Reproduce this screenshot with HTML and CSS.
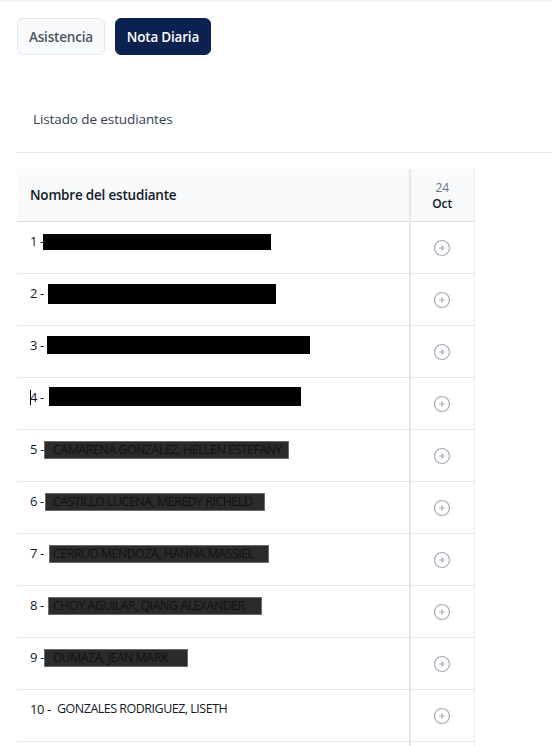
FILE: index.html
```html
<!DOCTYPE html>
<html lang="es">
<head>
  <meta charset="UTF-8">
  <meta name="viewport" content="width=device-width, initial-scale=1.0">
  <title>Nota Diaria</title>
  <link rel="stylesheet" href="styles.css">
</head>
<body>
  <div class="page">
    <div class="tabs">
      <button class="tab">Asistencia</button>
      <button class="tab active">Nota Diaria</button>
    </div>

    <div class="list-header">Listado de estudiantes</div>

    <table class="grades">
      <thead>
        <tr>
          <th class="name-col">Nombre del estudiante</th>
          <th class="date-col"><span class="day">24</span><span class="month">Oct</span></th>
        </tr>
      </thead>
      <tbody>
        <tr>
          <td class="name"><span class="num">1 -</span><span class="redact r1"></span></td>
          <td class="grade"><span class="add"></span></td>
        </tr>
        <tr>
          <td class="name"><span class="num">2 -</span><span class="redact r2"></span></td>
          <td class="grade"><span class="add"></span></td>
        </tr>
        <tr>
          <td class="name"><span class="num">3 -</span><span class="redact r3"></span></td>
          <td class="grade"><span class="add"></span></td>
        </tr>
        <tr>
          <td class="name"><span class="caret"></span><span class="num">4 -</span><span class="redact r4"></span></td>
          <td class="grade"><span class="add"></span></td>
        </tr>
        <tr>
          <td class="name"><span class="num">5 -</span><span class="mark m5">CAMARENA GONZALEZ, HELLEN ESTEFANY</span></td>
          <td class="grade"><span class="add"></span></td>
        </tr>
        <tr>
          <td class="name"><span class="num">6 -</span><span class="mark m6">CASTILLO LUCENA, MEREDY RICHELD</span></td>
          <td class="grade"><span class="add"></span></td>
        </tr>
        <tr>
          <td class="name"><span class="num">7 -</span><span class="mark m7">CERRUD MENDOZA, HANNA MASSIEL</span></td>
          <td class="grade"><span class="add"></span></td>
        </tr>
        <tr>
          <td class="name"><span class="num">8 -</span><span class="mark m8">CHOY AGUILAR, QIANG ALEXANDER</span></td>
          <td class="grade"><span class="add"></span></td>
        </tr>
        <tr>
          <td class="name"><span class="num">9 -</span><span class="mark m9">DUMAZA, JEAN MARK</span></td>
          <td class="grade"><span class="add"></span></td>
        </tr>
        <tr>
          <td class="name"><span class="num wide">10 -</span><span class="plain">GONZALES RODRIGUEZ, LISETH</span></td>
          <td class="grade"><span class="add"></span></td>
        </tr>
        <tr>
          <td class="name"></td>
          <td class="grade"></td>
        </tr>
      </tbody>
    </table>
  </div>

  <script>
    const icon = '<svg width="18" height="18" viewBox="0 0 18 18"><circle cx="9" cy="9" r="7.5" fill="none" stroke="#a3a8b3" stroke-width="1.2"/><path d="M9 6.2v5.6M6.2 9h5.6" stroke="#a3a8b3" stroke-width="1.2"/></svg>';
    document.querySelectorAll('.add').forEach(el => {
      el.innerHTML = icon;
    });
  </script>
</body>
</html>
```

FILE: styles.css
```css
* {
  margin: 0;
  padding: 0;
  box-sizing: border-box;
}

body {
  font-family: "Open Sans", "Noto Sans", sans-serif;
  background-color: #fff;
  border-top: 2px solid #f3f4f6;
  color: #111827;
}

.page {
  padding: 16px 0 0 17px;
}

.tabs {
  display: flex;
  gap: 10px;
}

.tab {
  height: 37px;
  padding: 0 11px;
  font-family: inherit;
  font-size: 13.5px;
  font-weight: 600;
  letter-spacing: -0.2px;
  color: #4b5563;
  background-color: #f8fafc;
  border: 1px solid #e2e8f0;
  border-radius: 6px;
  cursor: pointer;
}

.tab.active {
  background-color: #0b2150;
  border-color: #0b2150;
  color: #fff;
}

.list-header {
  margin-top: 45px;
  padding: 10px 16px 24px;
  font-size: 13.5px;
  font-weight: 500;
  letter-spacing: -0.1px;
  color: #334155;
  border-bottom: 1px solid #e5e7eb;
}

.grades {
  margin-top: 16px;
  border-collapse: collapse;
  font-size: 13.5px;
}

.grades th {
  height: 52px;
  background-color: #f8fafc;
  border-bottom: 1px solid #d9dce1;
  text-align: left;
}

.name-col {
  width: 393px;
  padding-left: 13px;
  font-weight: 600;
  letter-spacing: -0.2px;
  color: #111827;
  border-right: 2px solid #e5e7eb;
}

.date-col {
  width: 64px;
  font-size: 12px;
  border-right: 1px solid #eceef1;
}

.grades th.date-col {
  text-align: center;
  padding-top: 2px;
}

.day {
  display: block;
  color: #6b7280;
  font-weight: 400;
  line-height: 16px;
}

.month {
  display: block;
  color: #111827;
  font-weight: 600;
  line-height: 16px;
}

.grades td {
  height: 52px;
  border-bottom: 1px solid #e5e7eb;
}

.name {
  padding: 9px 0 0 13px;
  vertical-align: top;
  font-weight: 500;
  white-space: nowrap;
  line-height: 20px;
  border-right: 2px solid #e5e7eb;
}

.num {
  display: inline-block;
  width: 14px;
  font-size: 13px;
  letter-spacing: -0.4px;
  vertical-align: top;
}

.num.wide {
  width: 27px;
}

.grade {
  text-align: center;
  vertical-align: middle;
  border-right: 1px solid #eceef1;
}

.add {
  display: inline-block;
  width: 18px;
  height: 18px;
  margin-top: 6px;
}

.add svg {
  display: block;
}

.redact {
  display: inline-block;
  background-color: #000;
  vertical-align: top;
}

.r1 { width: 228px; height: 16px; margin: 3px 0 0 -1px; }
.r2 { width: 228px; height: 20px; margin: 1px 0 0 4px; }
.r3 { width: 263px; height: 18px; margin: 1px 0 0 3px; }
.r4 { width: 252px; height: 19px; margin: 0 0 0 5px; }

.caret {
  display: inline-block;
  width: 1px;
  height: 15px;
  margin: 3px -1px 0 0;
  background-color: #000;
  vertical-align: top;
}

.mark {
  display: inline-block;
  height: 18px;
  margin-top: 2px;
  line-height: 16px;
  font-size: 12.5px;
  font-weight: 400;
  letter-spacing: -0.55px;
  vertical-align: top;
  background-color: #2b2b2b;
  border: 1px solid #6b6b6b;
  color: #121212;
  overflow: hidden;
}

.m5 { width: 245px; padding-left: 8px; }
.m6 { width: 220px; margin-left: 1px; padding-left: 7px; }
.m7 { width: 220px; margin-left: 5px; padding-left: 3px; }
.m8 { width: 214px; margin-left: 4px; padding-left: 4px; }
.m9 { width: 144px; padding-left: 8px; }

.plain {
  font-size: 12.5px;
  font-weight: 500;
  letter-spacing: -0.5px;
  vertical-align: top;
}
```
